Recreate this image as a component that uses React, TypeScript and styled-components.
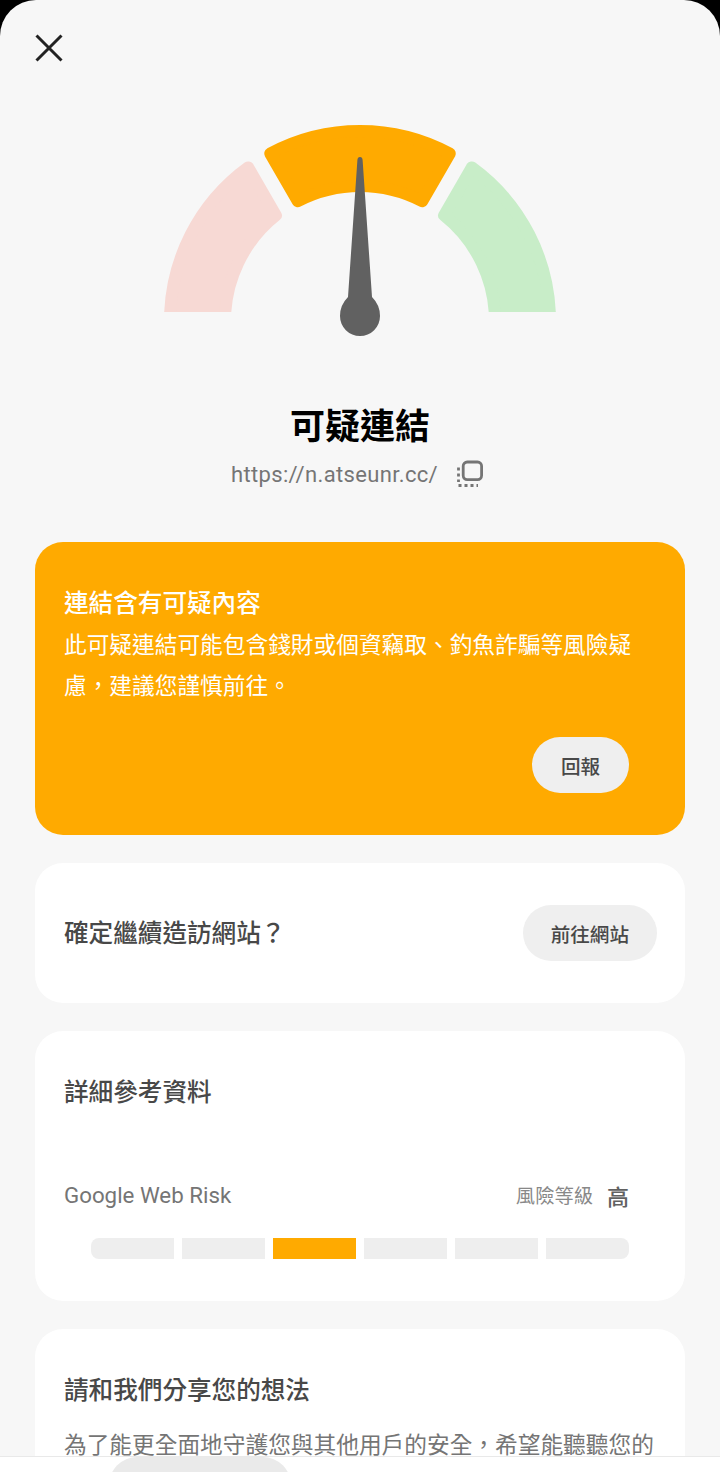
import React from "react";
import styled, { createGlobalStyle } from "styled-components";

const CJK = `Roboto, "Noto Sans CJK TC", "Noto Sans CJK SC", sans-serif`;

const Global = createGlobalStyle`
  html, body { margin: 0; padding: 0; background: #000; }
  body { font-family: ${CJK}; }
  #root { width: 720px; height: 1472px; overflow: hidden; }
`;

const Screen = styled.div`
  position: relative;
  width: 720px;
  height: 1472px;
  background: #f7f7f7;
  border-radius: 36px 36px 0 0;
  overflow: hidden;
`;

const CloseButton = styled.div`
  width: 36px;
  height: 36px;
  margin: 30px 0 0 -4px;
  color: #222;
`;

const Content = styled.div`
  display: flex;
  flex-direction: column;
  padding: 0 35px;
`;

const GaugeWrap = styled.div`
  display: flex;
  justify-content: center;
  padding-top: 54px;
  height: 220px;
`;

const Heading = styled.h1`
  margin: 65px 0 0;
  text-align: center;
  font-size: 35px;
  line-height: 46px;
  font-weight: 700;
  color: #000;
`;

const UrlRow = styled.div`
  display: flex;
  justify-content: center;
  align-items: center;
  gap: 18px;
  margin-top: 5px;
  padding-right: 5px;
  height: 36px;
  font-size: 22px;
  color: #757575;
  letter-spacing: 0.35px;
`;

const AlertCard = styled.section`
  margin-top: 50px;
  height: 293px;
  box-sizing: border-box;
  background: #ffaa00;
  border-radius: 28px;
  padding: 41px 28px 0 29px;
  color: #fff;
  display: flex;
  flex-direction: column;
`;

const AlertTitle = styled.div`
  font-size: 24.6px;
  line-height: 42px;
  font-weight: 500;
`;

const AlertBody = styled.p`
  margin: 0;
  padding-right: 24px;
  font-size: 22.7px;
  line-height: 41px;
  font-weight: 400;
`;

const PillButton = styled.div`
  display: flex;
  align-items: center;
  justify-content: center;
  box-sizing: border-box;
  height: 56px;
  min-width: 97px;
  border-radius: 28px;
  background: #efefef;
  color: #484848;
  font-size: 19.6px;
  font-weight: 500;
  padding: 0 28px;
`;

const AlertAction = styled.div`
  display: flex;
  justify-content: flex-end;
  margin: 30px 28px 0 0;
`;

const Card = styled.section`
  margin-top: 28px;
  background: #fff;
  border-radius: 28px;
  box-sizing: border-box;
  padding: 0 28px 0 29px;
`;

const ContinueCard = styled(Card)`
  height: 140px;
  display: flex;
  align-items: center;
  justify-content: space-between;
`;

const CardTitle = styled.div`
  font-size: 24.6px;
  line-height: 36px;
  font-weight: 500;
  color: #484848;
`;

const ContinueTitle = styled(CardTitle)`
  padding-top: 1px;
`;

const RiskCard = styled(Card)`
  height: 270px;
  padding: 44px 56px 0 29px;
`;

const RiskHead = styled.div`
  display: flex;
  justify-content: space-between;
  align-items: center;
  margin-top: 66px;
  height: 36px;
`;

const RiskName = styled.div`
  font-size: 22.3px;
  color: #757575;
`;

const RiskLevel = styled.div`
  display: flex;
  align-items: center;
  gap: 14px;
  font-size: 19.3px;
  color: #888;
`;

const RiskValue = styled.span`
  font-size: 22px;
  font-weight: 500;
  color: #616161;
`;

const Meter = styled.div`
  display: grid;
  grid-template-columns: repeat(6, 1fr);
  gap: 7.6px;
  margin: 25px 0 0 27px;
  height: 21px;
  border-radius: 8px;
  overflow: hidden;
`;

const MeterCell = styled.div<{ $on?: boolean }>`
  background: ${(p) => (p.$on ? "#ffaa00" : "#eeeeee")};
`;

const ShareCard = styled(Card)`
  padding-top: 44px;
  height: 300px;
`;

const ShareBody = styled.p`
  margin: 16px 0 0;
  font-size: 22.7px;
  line-height: 41px;
  color: #757575;
  white-space: nowrap;
`;

const BottomBar = styled.div`
  position: absolute;
  left: 0;
  right: 0;
  bottom: 0;
  height: 16px;
  box-sizing: border-box;
  padding-left: 109px;
  background: #fff;
  border-top: 1px solid #e9e9e9;
  overflow: hidden;
`;

const BottomButton = styled.div`
  width: 182px;
  height: 56px;
  border-radius: 28px;
  background: #eaeaea;
`;

function Gauge() {
  return (
    <svg width="392" height="220" viewBox="164 120 392 220">
      <defs>
        <clipPath id="gaugeBase">
          <rect x="160" y="100" width="400" height="212" />
        </clipPath>
      </defs>
      <g clipPath="url(#gaugeBase)" strokeWidth="12" strokeLinejoin="round">
        <path
          d="M170 330 L170 321 A190 190 0 0 1 248.2 167.4 L275.9 215.4 A135 135 0 0 0 225 321 L225 330 Z"
          fill="#f7d9d4"
          stroke="#f7d9d4"
        />
        <path
          d="M550 330 L550 321 A190 190 0 0 0 471.8 167.4 L444.1 215.4 A135 135 0 0 1 495 321 L495 330 Z"
          fill="#c8edc8"
          stroke="#c8edc8"
        />
      </g>
      <path
        d="M270.2 153.6 A190 190 0 0 1 449.8 153.6 L422.2 201.2 A135 135 0 0 0 297.8 201.2 Z"
        fill="#ffaa00"
        stroke="#ffaa00"
        strokeWidth="12"
        strokeLinejoin="round"
      />
      <path
        d="M357.4 160 Q357.6 157 360 157 Q362.4 157 362.6 160 L372 297 Q380 305 380 316 A20 20 0 0 1 340 316 Q340 305 348 297 Z"
        fill="#616161"
      />
    </svg>
  );
}

function CopyIcon() {
  return (
    <svg width="28" height="28" viewBox="0 0 28 28" fill="none" stroke="#757575">
      <rect x="7.2" y="2" width="18.4" height="17.6" rx="4" strokeWidth="2.8" />
      <path d="M2.5 7.5V22M2.5 25.5H22" strokeWidth="2.8" strokeDasharray="3 3" />
    </svg>
  );
}

export default function App() {
  return (
    <>
      <Global />
      <Screen>
        <Content>
          <CloseButton>
            <svg width="36" height="36" viewBox="0 0 36 36" fill="none" stroke="currentColor" strokeWidth="3">
              <path d="M5.5 5.5 L30.5 30.5 M30.5 5.5 L5.5 30.5" />
            </svg>
          </CloseButton>
          <GaugeWrap>
            <Gauge />
          </GaugeWrap>
          <Heading>可疑連結</Heading>
          <UrlRow>
            <span>https://n.atseunr.cc/</span>
            <CopyIcon />
          </UrlRow>
          <AlertCard>
            <AlertTitle>連結含有可疑內容</AlertTitle>
            <AlertBody>此可疑連結可能包含錢財或個資竊取、釣魚詐騙等風險疑慮，建議您謹慎前往。</AlertBody>
            <AlertAction>
              <PillButton>回報</PillButton>
            </AlertAction>
          </AlertCard>
          <ContinueCard>
            <ContinueTitle>確定繼續造訪網站？</ContinueTitle>
            <PillButton>前往網站</PillButton>
          </ContinueCard>
          <RiskCard>
            <CardTitle>詳細參考資料</CardTitle>
            <RiskHead>
              <RiskName>Google Web Risk</RiskName>
              <RiskLevel>
                風險等級
                <RiskValue>高</RiskValue>
              </RiskLevel>
            </RiskHead>
            <Meter>
              {[0, 1, 2, 3, 4, 5].map((i) => (
                <MeterCell key={i} $on={i === 2} />
              ))}
            </Meter>
          </RiskCard>
          <ShareCard>
            <CardTitle>請和我們分享您的想法</CardTitle>
            <ShareBody>為了能更全面地守護您與其他用戶的安全，希望能聽聽您的</ShareBody>
          </ShareCard>
        </Content>
        <BottomBar>
          <BottomButton />
        </BottomBar>
      </Screen>
    </>
  );
}
